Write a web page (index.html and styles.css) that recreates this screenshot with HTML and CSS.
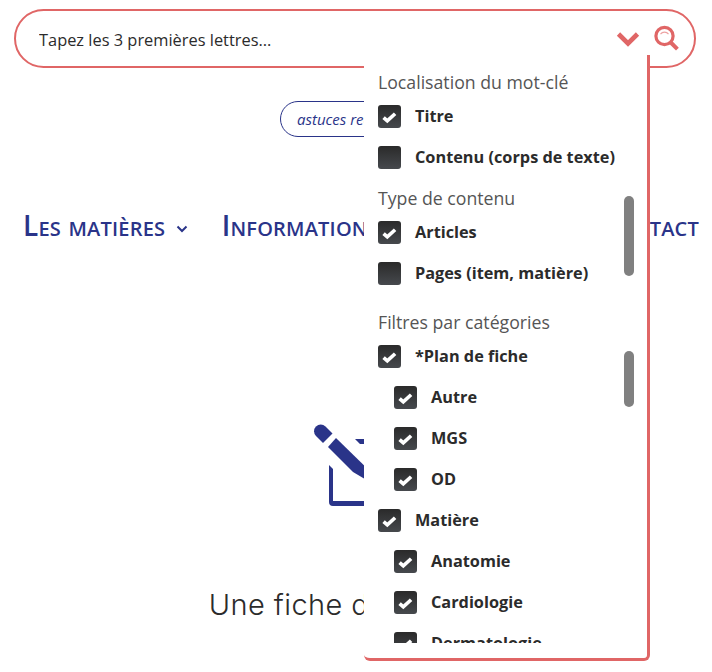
FILE: index.html
```html
<!DOCTYPE html>
<html lang="fr">
<head>
    <meta charset="UTF-8">
    <meta name="viewport" content="width=device-width, initial-scale=1.0">
    <title>Recherche</title>
    <link rel="stylesheet" href="styles.css">
</head>
<body>
    <svg class="sprites" width="0" height="0">
        <symbol id="check" viewBox="0 0 23 23">
            <path d="M5.600 12.600l3.700 3.300 7.800-7.200" fill="none" stroke="#fff" stroke-width="3.600"/>
        </symbol>
    </svg>

    <div class="search-box">
        <input class="search-input" type="text" placeholder="Tapez les 3 premières lettres...">
        <svg class="chevron" width="24" height="16" viewBox="0 0 24 16">
            <path d="M2.500 3l9.500 9.500L21.500 3" fill="none" stroke="#e06666" stroke-width="4.600"/>
        </svg>
        <svg class="loupe" width="26" height="28" viewBox="0 0 26 28">
            <circle cx="10.500" cy="11" r="8.600" fill="none" stroke="#e06666" stroke-width="3.200"/>
            <path d="M6.500 9.200a5 5 0 0 1 8 0" fill="none" stroke="#eda3a3" stroke-width="1.200"/>
            <path d="M16.800 17.500l6.600 6.600" fill="none" stroke="#e06666" stroke-width="4"/>
        </svg>

        <div class="search-panel">
            <div class="panel-scroll">
                <h3 class="panel-title">Localisation du mot-clé</h3>
                <div class="check-row"><span class="box"><svg><use href="#check"/></svg></span>Titre</div>
                <div class="check-row"><span class="box"></span>Contenu (corps de texte)</div>

                <h3 class="panel-title">Type de contenu</h3>
                <div class="check-row"><span class="box"><svg><use href="#check"/></svg></span>Articles</div>
                <div class="check-row"><span class="box"></span>Pages (item, matière)</div>

                <h3 class="panel-title panel-title-cat">Filtres par catégories</h3>
                <div class="check-row"><span class="box"><svg><use href="#check"/></svg></span>*Plan de fiche</div>
                <div class="check-row sub"><span class="box"><svg><use href="#check"/></svg></span>Autre</div>
                <div class="check-row sub"><span class="box"><svg><use href="#check"/></svg></span>MGS</div>
                <div class="check-row sub"><span class="box"><svg><use href="#check"/></svg></span>OD</div>
                <div class="check-row"><span class="box"><svg><use href="#check"/></svg></span>Matière</div>
                <div class="check-row sub"><span class="box"><svg><use href="#check"/></svg></span>Anatomie</div>
                <div class="check-row sub"><span class="box"><svg><use href="#check"/></svg></span>Cardiologie</div>
                <div class="check-row sub"><span class="box"><svg><use href="#check"/></svg></span>Dermatologie</div>
            </div>
            <span class="thumb thumb-type"></span>
            <span class="thumb thumb-cat"></span>
        </div>
    </div>

    <div class="tips-row">
        <a class="tips" href="#">astuces recherche</a>
    </div>

    <nav class="menu">
        <a href="#">Les matières
            <svg width="12" height="8" viewBox="0 0 12 8"><path d="M1.500 1.500L6 6l4.500-4.500" fill="none" stroke="#2a3489" stroke-width="2"/></svg>
        </a>
        <a href="#">Informations</a>
        <a class="menu-last" href="#">Contact</a>
    </nav>

    <div class="empty-icon">
        <svg width="84" height="84" viewBox="0 0 84 84">
            <path d="M16 42l4 4v32h48V55l4-4v28a4 4 0 0 1-4 4H20a4 4 0 0 1-4-4z" fill="#2a3489"/>
            <path d="M42 16h26a4 4 0 0 1 4 4v6l-5-5H47z" fill="#2a3489"/>
            <path d="M19.500 10.500L10 20 3 13a6.700 6.700 0 0 1 9.500-9.500z" fill="#2a3489"/>
            <path d="M23 15l43 42 6 9-10-4-22-13-25-25z" fill="#2a3489"/>
        </svg>
    </div>

    <h2 class="empty-title">Une fiche de révision</h2>
</body>
</html>
```

FILE: styles.css
```css
* {
    box-sizing: border-box;
}
html, body {
    height: 100%;
    overflow: hidden;
}
body {
    font-family: "Open Sans", sans-serif;
    background-color: #fff;
    color: #2b2b2b;
    margin: 0;
}
.sprites {
    position: absolute;
}

/* barre de recherche */
.search-box {
    position: relative;
    display: flex;
    align-items: center;
    height: 59px;
    margin: 9px 16px 0 14px;
    padding: 0 14px 0 23px;
    border: 2px solid #e06666;
    border-radius: 30px;
}
.search-input {
    flex-grow: 1;
    height: 24px;
    margin-top: 2px;
    border: none;
    outline: none;
    padding: 0;
    font-family: inherit;
    font-size: 16.4px;
}
.search-input::placeholder {
    color: #2b2b2b;
    opacity: 1;
}
.chevron {
    margin-right: 14px;
}

/* panneau des filtres */
.search-panel {
    position: absolute;
    top: 44px;
    left: 348px;
    width: 286px;
    height: 606px;
    background-color: #fff;
    border-right: 3px solid #e06666;
    border-bottom: 3px solid #e06666;
    border-radius: 0 0 6px 6px;
}
.panel-scroll {
    height: 588px;
    padding: 16px 0 0 14px;
    overflow: hidden;
}
.panel-title {
    margin: -1px 0 11px;
    height: 24px;
    font-size: 17.7px;
    font-weight: 400;
    line-height: 24px;
    color: #555;
}
.panel-title-cat {
    margin-top: 25px;
}
.check-row {
    display: flex;
    align-items: center;
    gap: 14px;
    height: 23px;
    margin-bottom: 18px;
    font-size: 16.3px;
    font-weight: 700;
    line-height: 23px;
}
.check-row.sub {
    margin-left: 16px;
}
.box {
    flex: 0 0 23px;
    width: 23px;
    height: 23px;
    border-radius: 3px;
    background: linear-gradient(#2a2a2a, #46494d);
}
.box svg {
    display: block;
    width: 23px;
    height: 23px;
}
.thumb {
    position: absolute;
    left: 260px;
    width: 10px;
    border-radius: 5px;
    background-color: #808080;
}
.thumb-type {
    top: 141px;
    height: 80px;
}
.thumb-cat {
    top: 296px;
    height: 56px;
}

/* contenu de la page */
.tips-row {
    display: flex;
    padding: 33px 0 0 280px;
}
.tips {
    display: block;
    height: 36px;
    width: 190px;
    padding: 0 16px;
    border: 1px solid #2a3489;
    border-radius: 18px;
    color: #2a3489;
    font-size: 15px;
    font-style: italic;
    line-height: 34px;
    text-decoration: none;
}
.menu {
    display: flex;
    gap: 34px;
    padding: 0 13px 0 23px;
    margin-top: 70px;
}
.menu a {
    color: #2a3489;
    font-size: 28px;
    font-weight: 600;
    font-variant: small-caps;
    letter-spacing: 0.2px;
    line-height: 36px;
    text-decoration: none;
    white-space: nowrap;
}
.menu .menu-last {
    margin-left: auto;
}
.menu svg {
    margin-left: 3px;
    vertical-align: 3px;
}
.empty-icon {
    display: flex;
    margin: 180px 0 0 313px;
}
.empty-title {
    margin: 80px 0 0;
    font-family: Inter, sans-serif;
    font-size: 29px;
    font-weight: 300;
    letter-spacing: 0.4px;
    line-height: 36px;
    text-align: center;
    white-space: nowrap;
}
```
